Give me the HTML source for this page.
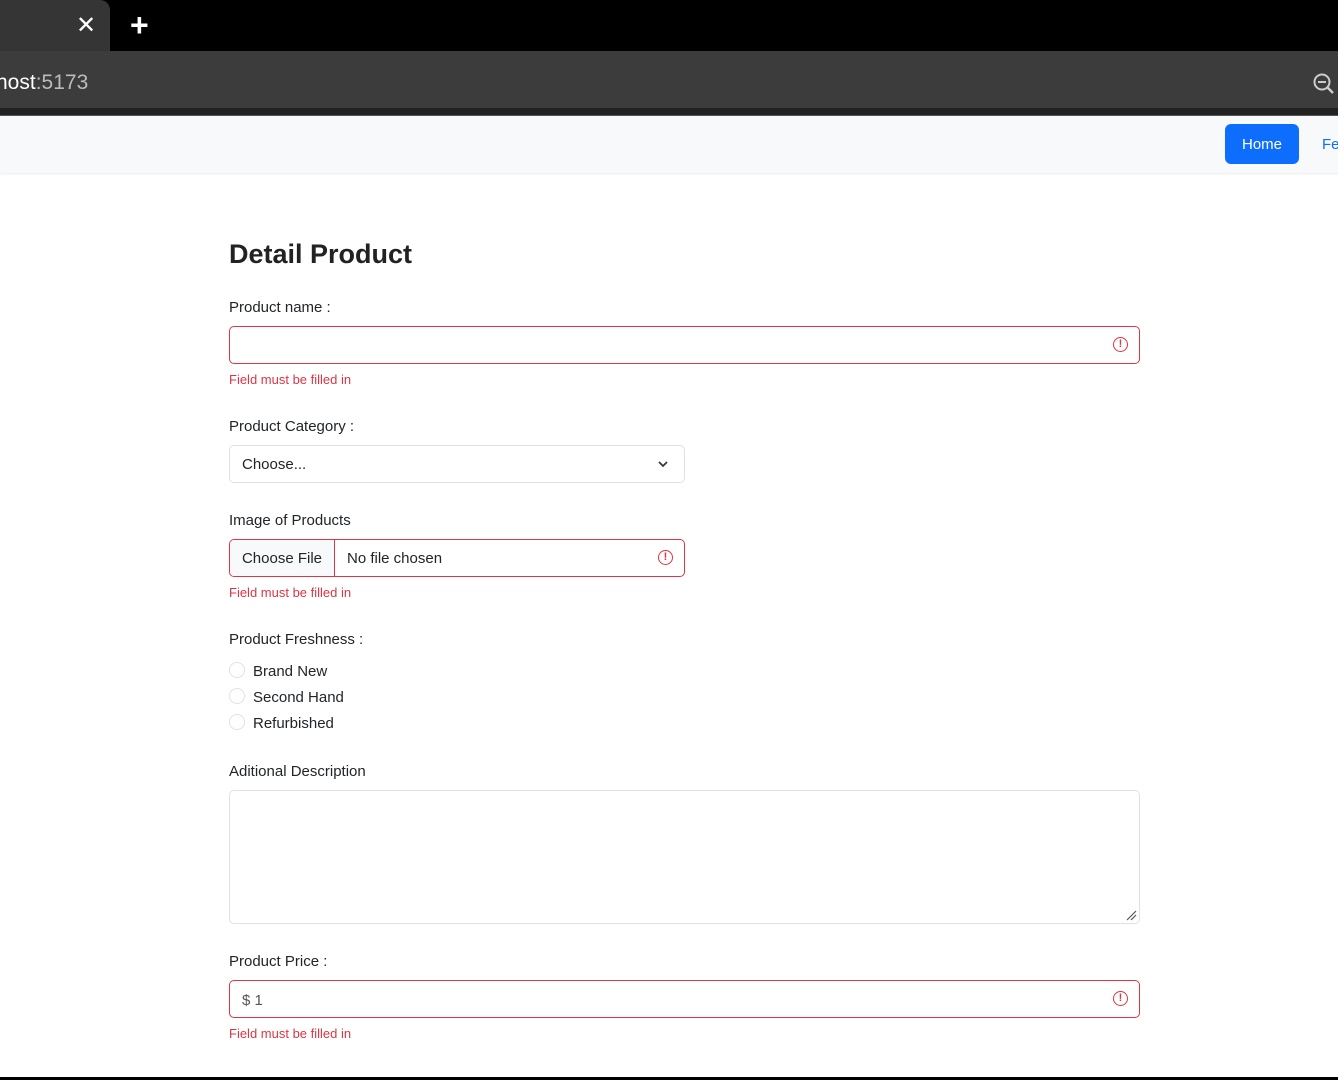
<!DOCTYPE html>
<html><head><style>
*{box-sizing:border-box;margin:0;padding:0}
body{width:1338px;height:1080px;overflow:hidden;background:#fff;font-family:"Liberation Sans",sans-serif;color:#212529;position:relative}
.a{position:absolute}
.lbl{position:absolute;left:229px;font-size:15px;color:#212529}
.err{position:absolute;left:229px;font-size:13px;color:#dc3545}
.inp{position:absolute;left:229px;height:38px;border:1px solid #dc3545;border-radius:5px;background:#fff}
.ic{position:absolute;width:15px;height:15px;border:1.6px solid #dc3545;border-radius:50%;color:#dc3545;font-size:11px;font-weight:bold;text-align:center;line-height:12px}
.rad{position:absolute;left:229px;width:16px;height:16px;border:1px solid #dee2e6;border-radius:50%}
.rt{position:absolute;left:253px;font-size:15px}
</style></head><body>
<div class="a" style="left:0;top:0;width:1338px;height:51px;background:#000"></div>
<div class="a" style="left:0;top:0;width:110px;height:51px;background:#353535;border-top-right-radius:10px"></div>
<div class="a" style="left:76px;top:11px;color:#fff;font-size:24px">✕</div>
<div class="a" style="left:130px;top:7px;color:#fff;font-size:32px;font-weight:bold">+</div>
<div class="a" style="left:0;top:51px;width:1338px;height:57px;background:#3c3c3c"></div>
<div class="a" style="left:0;top:108px;width:1338px;height:8px;background:#222;border-bottom:1px solid #555"></div>
<div class="a" style="left:-4px;top:71px;color:#fff;font-size:21px">host<span style="color:#bbb">:5173</span></div>
<svg class="a" style="left:1312px;top:72px" width="24" height="24"><circle cx="10" cy="10" r="7.5" fill="none" stroke="#ccc" stroke-width="2"/><line x1="6" y1="10" x2="14" y2="10" stroke="#ccc" stroke-width="2"/><line x1="15.5" y1="15.5" x2="21" y2="21" stroke="#ccc" stroke-width="2.5"/></svg>
<div class="a" style="left:0;top:116px;width:1338px;height:57px;background:#f8f9fa;box-shadow:0 1px 2px rgba(0,0,0,.08)"></div>
<div class="a" style="left:1225px;top:124px;width:74px;height:40px;background:#0d6efd;border-radius:6px;color:#fff;font-size:15px;text-align:center;line-height:42px">Home</div>
<div class="a" style="left:1322px;top:136px;color:#0d6efd;font-size:15px">Fe</div>
<div class="a" style="left:229px;top:239px;font-size:27px;font-weight:bold;color:#222">Detail Product</div>
<div class="lbl" style="top:299px">Product name :</div>
<div class="inp" style="top:326px;width:911px"><div class="ic" style="left:883px;top:10px">!</div></div>
<div class="err" style="top:372px">Field must be filled in</div>
<div class="lbl" style="top:418px">Product Category :</div>
<div class="inp" style="top:445px;width:456px;border-color:#dee2e6"><span class="a" style="left:12px;top:10px;font-size:15px">Choose...</span>
<svg class="a" style="left:427px;top:12px" width="12" height="12"><path d="M2 4l4 4 4-4" fill="none" stroke="#343a40" stroke-width="1.8"/></svg></div>
<div class="lbl" style="top:512px">Image of Products</div>
<div class="inp" style="top:539px;width:456px;overflow:hidden"><div class="a" style="left:0;top:0;width:105px;height:36px;background:#f8f9fa;border-right:1px solid #dc3545;font-size:15px;line-height:38px;text-align:center">Choose File</div><span class="a" style="left:117px;top:10px;font-size:15px">No file chosen</span><div class="ic" style="left:428px;top:10px">!</div></div>
<div class="err" style="top:585px">Field must be filled in</div>
<div class="lbl" style="top:631px">Product Freshness :</div>
<div class="rad" style="top:662px"></div><div class="rt" style="top:663px">Brand New</div>
<div class="rad" style="top:688px"></div><div class="rt" style="top:689px">Second Hand</div>
<div class="rad" style="top:714px"></div><div class="rt" style="top:715px">Refurbished</div>
<div class="lbl" style="top:763px">Aditional Description</div>
<div class="a" style="left:229px;top:790px;width:911px;height:134px;border:1px solid #dee2e6;border-radius:5px"><svg class="a" style="right:2px;bottom:2px" width="12" height="12"><path d="M2 11L11 2M6 11L11 6" stroke="#555" stroke-width="1.2"/></svg></div>
<div class="lbl" style="top:953px">Product Price :</div>
<div class="inp" style="top:980px;width:911px"><span class="a" style="left:12px;top:11px;font-size:15px;color:#555">$ 1</span><div class="ic" style="left:883px;top:10px">!</div></div>
<div class="err" style="top:1026px">Field must be filled in</div>
<div class="a" style="left:0;top:1077px;width:1338px;height:3px;background:#000"></div>
</body></html>
